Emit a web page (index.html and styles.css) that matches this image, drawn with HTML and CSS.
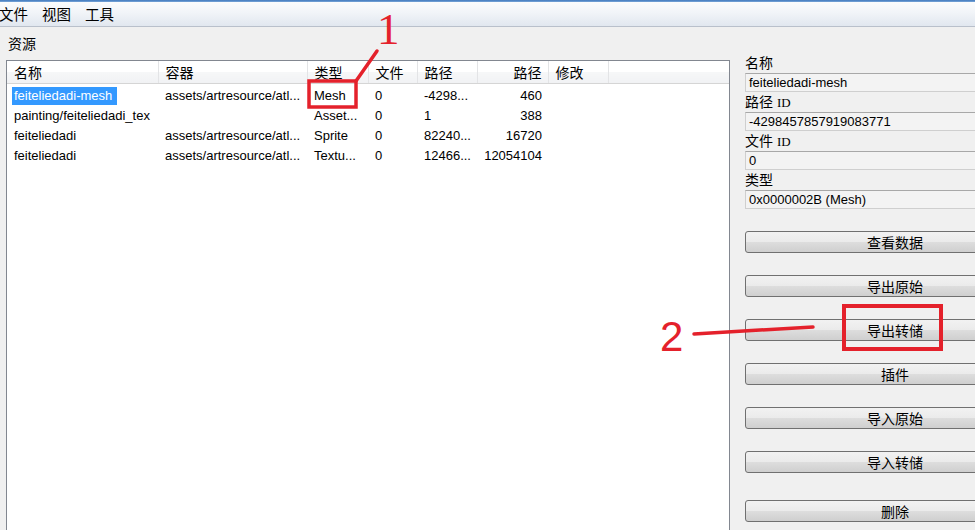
FILE: index.html
```html
<!DOCTYPE html>
<html lang="zh-CN">
<head>
  <meta charset="UTF-8" />
  <title>资源</title>
  <link rel="stylesheet" href="styles.css">
</head>
<body>
  <div class="titlebar"></div>
  <div class="menubar">
    <span class="menu first">文件</span>
    <span class="menu">视图</span>
    <span class="menu">工具</span>
  </div>
  <div class="main">
    <div class="assets">
      <div class="group-label">资源</div>
      <div class="listbox">
        <table class="list">
          <colgroup>
            <col style="width:151px"><col style="width:149px"><col style="width:61px"><col style="width:49px">
            <col style="width:60px"><col style="width:71px"><col style="width:60px"><col>
          </colgroup>
          <thead>
            <tr>
              <th>名称</th><th>容器</th><th>类型</th><th>文件</th><th>路径</th><th class="num">路径</th><th>修改</th><th class="last"></th>
            </tr>
          </thead>
          <tbody>
            <tr>
              <td><span class="selected">feiteliedadi-mesh</span></td><td>assets/artresource/atl...</td><td>Mesh</td><td>0</td><td>-4298...</td><td class="num">460</td><td></td><td></td>
            </tr>
            <tr>
              <td>painting/feiteliedadi_tex</td><td></td><td>Asset...</td><td>0</td><td>1</td><td class="num">388</td><td></td><td></td>
            </tr>
            <tr>
              <td>feiteliedadi</td><td>assets/artresource/atl...</td><td>Sprite</td><td>0</td><td>82240...</td><td class="num">16720</td><td></td><td></td>
            </tr>
            <tr>
              <td>feiteliedadi</td><td>assets/artresource/atl...</td><td>Textu...</td><td>0</td><td>12466...</td><td class="num">12054104</td><td></td><td></td>
            </tr>
          </tbody>
        </table>
      </div>
    </div>
    <div class="info">
      <div class="field-label">名称</div>
      <div class="field">feiteliedadi-mesh</div>
      <div class="field-label">路径 <span class="id">ID</span></div>
      <div class="field">-4298457857919083771</div>
      <div class="field-label">文件 <span class="id">ID</span></div>
      <div class="field">0</div>
      <div class="field-label">类型</div>
      <div class="field">0x0000002B (Mesh)</div>
      <div class="buttons">
        <button class="btn">查看数据</button>
        <button class="btn">导出原始</button>
        <button class="btn">导出转储</button>
        <button class="btn">插件</button>
        <button class="btn">导入原始</button>
        <button class="btn">导入转储</button>
        <button class="btn delete">删除</button>
      </div>
    </div>
  </div>

  <!-- red markup drawn over the screenshot -->
  <svg class="markup" width="975" height="530" viewBox="0 0 975 530">
    <rect x="309" y="81" width="47" height="26" fill="none" stroke="#e4212b" stroke-width="3.5"/>
    <line x1="356" y1="81" x2="377" y2="51" stroke="#e4212b" stroke-width="3.5" stroke-linecap="round"/>
    <rect x="844" y="306" width="97" height="43" fill="none" stroke="#e4212b" stroke-width="4"/>
    <path d="M694 334 L760 330 L813 327" fill="none" stroke="#e4212b" stroke-width="3.5" stroke-linecap="round"/>
  </svg>
  <div class="mark mark-one">1</div>
  <div class="mark mark-two">2</div>
</body>
</html>
```

FILE: styles.css
```css
html, body { margin: 0; padding: 0; }
body { width: 975px; height: 530px; overflow: hidden; position: relative; background: #f0f0f0; color: #000; font-family: "Liberation Sans", "Noto Sans CJK SC", sans-serif; font-size: 13px; }
.titlebar { height: 2px; background: linear-gradient(#3f78bd, #7aa6d8); }
.menubar { height: 24px; border-bottom: 1px solid #b9c0cb; background: linear-gradient(#fbfcfd, #f1f4f8 45%, #e1e7ef); display: flex; align-items: center; gap: 14px; }
.menu { font-size: 14.5px; line-height: 18px; margin-top: 1px; }
.menu.first { margin-left: -1px; }
.main { display: flex; height: 503px; overflow: hidden; }
.assets { width: 724px; padding-left: 6px; flex: none; display: flex; flex-direction: column; }
.group-label { height: 33px; box-sizing: border-box; padding: 8px 0 0 2px; font-size: 14px; line-height: 18px; }
.listbox { flex: 1; background: #fff; border: 1px solid #828790; border-bottom: none; }
.list { border-collapse: collapse; table-layout: fixed; width: 100%; }
.list th { height: 22px; padding: 0 0 0 7px; text-align: left; font-weight: normal; font-size: 14px; border-right: 1px solid #e3e4e6; border-bottom: 1px solid #d5d5d5; background: linear-gradient(#ffffff 50%, #f6f7f8 51%, #f1f2f4); white-space: nowrap; }
.list th.last { border-right: none; }
.list th.num, .list td.num { text-align: right; padding-right: 6px; }
.list td { height: 20px; padding: 0 0 0 7px; white-space: nowrap; overflow: hidden; font-size: 13px; }
.list tbody tr:first-child td { padding-top: 1px; }
.selected { background: #3399ff; color: #fff; padding: 1px 5px 2px 2px; margin-left: -2px; }
.info { flex: 1; min-width: 0; overflow: hidden; padding: 26px 0 0 15px; }
.field-label { height: 20px; font-size: 14px; line-height: 20px; }
.field-label .id { font-family: "Liberation Serif", serif; font-size: 13px; }
.field { width: 300px; height: 19px; box-sizing: border-box; padding: 1px 3px; line-height: 16px; background: #f3f3f3; border: 1px solid #cfcfcf; border-top-color: #a8a8a8; font-size: 13px; }
.buttons { display: flex; flex-direction: column; gap: 22px; padding-top: 22px; }
.btn { height: 22px; width: 300px; padding: 0; border: 1px solid #707070; border-radius: 3px; background: linear-gradient(#f2f2f2, #ebebeb 48%, #dddddd 52%, #cfcfcf); font-family: "Noto Sans CJK SC", sans-serif; font-size: 14px; line-height: 18px; color: #000; }
.btn.delete { margin-top: 5px; }
.markup { position: absolute; left: 0; top: 0; pointer-events: none; }
.mark { position: absolute; color: #e4212b; line-height: 1; }
.mark-one { left: 377px; top: 7px; font-family: "Liberation Serif", serif; font-size: 45px; }
.mark-two { left: 660px; top: 316px; font-family: "Liberation Sans", sans-serif; font-size: 42px; }
```
